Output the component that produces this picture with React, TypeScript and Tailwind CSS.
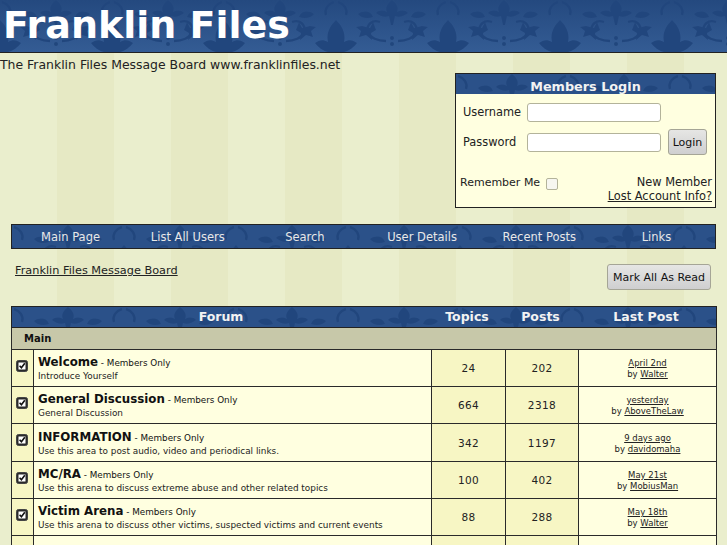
const FONT = "font-['DejaVu_Sans',sans-serif]";

const forums = [
  { name: "Welcome", desc: "Introduce Yourself", topics: "24", posts: "202", when: "April 2nd", by: "Walter", h: "h-[37px]" },
  { name: "General Discussion", desc: "General Discussion", topics: "664", posts: "2318", when: "yesterday", by: "AboveTheLaw", h: "h-[37px]" },
  { name: "INFORMATION", desc: "Use this area to post audio, video and periodical links.", topics: "342", posts: "1197", when: "9 days ago", by: "davidomaha", h: "h-[38px]" },
  { name: "MC/RA", desc: "Use this arena to discuss extreme abuse and other related topics", topics: "100", posts: "402", when: "May 21st", by: "MobiusMan", h: "h-[37px]" },
  { name: "Victim Arena", desc: "Use this arena to discuss other victims, suspected victims and current events", topics: "88", posts: "288", when: "May 18th", by: "Walter", h: "h-[37px]" },
  { name: "Allies Group", desc: "", topics: "", posts: "", when: "", by: "", h: "h-[38px]" },
];

// damask wallpaper behind the blue bars
function Damask({ id }: { id: string }) {
  return (
    <svg className="absolute inset-0 w-full h-full" aria-hidden="true">
      <defs>
        <pattern id={id} width={112} height={52} patternUnits="userSpaceOnUse">
          <g fill="#21467d" stroke="none">
            <path d="M56 0c5 4 7 8 5 12 4-2 8-2 11 1-4 3-9 5-13 3l-2 9h-2l-2-9c-4 2-9 0-13-3 3-3 7-3 11-1-2-4 0-8 5-12z" />
            <path d="M22 14c6-4 13-3 15 3-6 2-12 1-15-3zM90 14c-6-4-13-3-15 3 6 2 12 1 15-3z" />
            <path d="M26 26l8 2 3-6 3 8-5 3 1 7-6-5-7 2 2-6-5-4z" />
            <path d="M86 26l-8 2-3-6-3 8 5 3-1 7 6-5 7 2-2-6 5-4z" />
            <circle cx="56" cy="38" r="2" />
            <circle cx="56" cy="44" r="2" />
            <path d="M0 20c6 6 10 13 8 22 5-3 9-2 13 1-3 4-8 8-13 9H-8c-5-1-10-5-13-9 4-3 8-4 13-1-2-9 2-16 8-22z" />
            <path d="M112 20c6 6 10 13 8 22 5-3 9-2 13 1-3 4-8 8-13 9h-16c-5-1-10-5-13-9 4-3 8-4 13-1-2-9 2-16 8-22z" />
          </g>
          <g fill="none" stroke="#21467d" strokeWidth="2.4">
            <path d="M44 22c-8-3-14 3-12 10 2 6 10 9 18 9" />
            <path d="M68 22c8-3 14 3 12 10-2 6-10 9-18 9" />
            <path d="M2 2c6 2 10 7 8 13" />
            <path d="M110 2c-6 2-10 7-8 13" />
          </g>
        </pattern>
      </defs>
      <rect width="100%" height="100%" fill={`url(#${id})`} />
    </svg>
  );
}

function CheckIcon() {
  return (
    <svg width="12" height="12" viewBox="0 0 12 12" className="block ml-[4px] mb-[5px]">
      <rect x="0.5" y="0.5" width="11" height="11" rx="2" fill="#2a2a2a" stroke="#444" />
      <rect x="2.5" y="2.5" width="7" height="7" fill="#fff" />
      <path d="M3.6 5.8 5.4 7.8 8.8 3.2" fill="none" stroke="#111" strokeWidth="1.6" />
    </svg>
  );
}

function Row({ f }: { f: (typeof forums)[number] }) {
  return (
    <tr className={f.h}>
      <td className="border border-[#2a2a2a] bg-[#f7f6c4] p-0 align-middle"><CheckIcon /></td>
      <td className="border border-[#2a2a2a] bg-[#ffffe0] pl-1 pr-0 py-0 align-middle">
        <div className="leading-[14px] text-[#111] whitespace-nowrap">
          <span className="text-[11.8px] font-bold">{f.name}</span>
          {f.desc && <span className="text-[8.8px]"> - Members Only</span>}
        </div>
        <div className="text-[8.9px] leading-[12px] text-[#222] whitespace-nowrap">{f.desc}</div>
      </td>
      <td className="border border-[#2a2a2a] bg-[#f7f6c4] text-center text-[10.5px] tracking-[0.4px] text-[#222] px-0 pb-0 pt-[2px]">{f.topics}</td>
      <td className="border border-[#2a2a2a] bg-[#f7f6c4] text-center text-[10.5px] tracking-[0.4px] text-[#222] px-0 pb-0 pt-[2px]">{f.posts}</td>
      <td className="border border-[#2a2a2a] bg-[#ffffe0] text-center text-[8.5px] leading-[11px] text-[#222] px-0 pb-0 pt-[2px]">
        {f.when && <div className="underline">{f.when}</div>}
        {f.by && <div>by <span className="underline">{f.by}</span></div>}
      </td>
    </tr>
  );
}

export default function App() {
  return (
    <div className={`${FONT} w-[727px] h-[545px] overflow-hidden bg-[repeating-linear-gradient(90deg,#eaeecd_0px,#eaeecd_57px,#e6e9c4_57px,#e6e9c4_114px)] text-[#222]`}>
      <div className="relative h-[53px] bg-gradient-to-b from-[#24497f] to-[#345c94] border-b border-[#222]">
        <Damask id="head" />
        <h1 className="relative pl-[3px] text-[38px] leading-[50px] font-bold text-white">Franklin Files</h1>
      </div>

      <p className="text-[12.45px] leading-[22px] mt-px">The Franklin Files Message Board www.franklinfiles.net</p>

      <div className="flex justify-end pr-[11px] mt-[-3px]">
        <div className="w-[261px] h-[135px] border border-[#222] bg-[#ffffe0] flex flex-col">
          <div className="relative h-[20px] bg-[#2b5189] text-center">
            <Damask id="login" />
            <span className="relative text-[12.8px] leading-[20px] font-bold text-[#f2f2f2]">Members Login</span>
          </div>
          <div className="flex pl-[7px] mt-[8px] items-center h-[20px]">
            <span className="text-[11.4px] leading-[22px] w-[64px]">Username</span>
            <div className="w-[134px] h-[19px] bg-white border border-[#b3b39a] rounded-[3px]" />
          </div>
          <div className="flex pl-[7px] mt-[6px] items-center h-[28px]">
            <span className="text-[11.4px] leading-[22px] w-[64px]">Password</span>
            <div className="w-[134px] h-[19px] bg-white border border-[#b3b39a] rounded-[3px]" />
            <div className="ml-[7px] w-[39px] h-[26px] rounded-[3px] border border-[#a5a596] bg-gradient-to-b from-[#e6e6e4] to-[#cfcfd0] text-[11px] leading-[25px] text-center text-[#111]">Login</div>
          </div>
          <div className="flex justify-between pl-[4px] pr-[3px] mt-[19px]">
            <div className="flex items-center h-[16px] text-[11px]">
              Remember Me
              <span className="ml-[6px] w-[12px] h-[12px] border border-[#b3b39a] rounded-[2px] bg-[#f6f6f0] mt-[2px]" />
            </div>
            <div className="text-right text-[11.4px] leading-[14px]">
              <div>New Member</div>
              <div className="underline">Lost Account Info?</div>
            </div>
          </div>
        </div>
      </div>

      <div className="relative mx-[11px] mt-[16px] h-[25px] bg-[#2b5189] border border-[#222] grid grid-cols-6 text-[11.5px] leading-[25px] text-center text-[#e8e8e8]">
        <Damask id="nav" />
        {["Main Page", "List All Users", "Search", "User Details", "Recent Posts", "Links"].map((n) => (
          <span key={n} className="relative">{n}</span>
        ))}
      </div>

      <div className="flex justify-between pl-[15px] pr-[16px] mt-[15px] h-[42px]">
        <span className="text-[11.3px] leading-[14px] underline">Franklin Files Message Board</span>
        <div className="w-[104px] h-[26px] rounded-[3px] border border-[#a5a596] bg-gradient-to-b from-[#e6e6e4] to-[#cfcfd0] text-[11px] leading-[26px] text-center text-[#111]">Mark All As Read</div>
      </div>

      <table className="mx-[11px] w-[705px] table-fixed border-collapse">
        <colgroup>
          <col className="w-[22px]" />
          <col className="w-[398px]" />
          <col className="w-[74px]" />
          <col className="w-[73px]" />
          <col className="w-[138px]" />
        </colgroup>
        <thead>
          <tr className="h-[21px]">
            <th colSpan={5} className="relative border border-[#222] bg-[#2b5189] p-0 font-bold text-[12.5px] text-[#f2f2f2]">
              <Damask id="thead" />
              <div className="relative grid grid-cols-[418px_74px_73px_138px] leading-[18px] pb-[1px]">
                <span>Forum</span>
                <span>Topics</span>
                <span>Posts</span>
                <span>Last Post</span>
              </div>
            </th>
          </tr>
        </thead>
        <tbody>
          <tr className="h-[22px]">
            <td colSpan={5} className="border border-[#2a2a2a] bg-[#c7c8a9] pl-[12px] p-0 text-[10px] font-bold text-[#111]">Main</td>
          </tr>
          {forums.map((f) => <Row key={f.name} f={f} />)}
        </tbody>
      </table>
    </div>
  );
}
